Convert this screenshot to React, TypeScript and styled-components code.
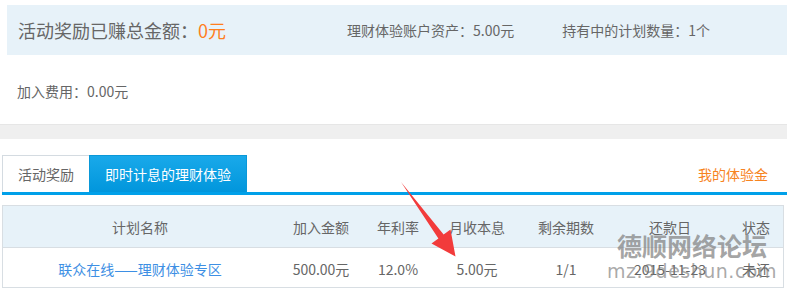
import React from 'react'
import styled, { createGlobalStyle } from 'styled-components'

const GlobalStyle = createGlobalStyle`
  html, body {
    margin: 0;
    padding: 0;
    background: #fff;
    font-family: "Microsoft YaHei", "Noto Sans CJK SC", "Noto Sans", sans-serif;
    color: #666;
  }
`

type Plan = {
  name: string
  amount: string
  rate: string
  monthly: string
  periods: string
  date: string
  status: string
}

const plans: Plan[] = [
  {
    name: '联众在线——理财体验专区',
    amount: '500.00元',
    rate: '12.0%',
    monthly: '5.00元',
    periods: '1/1',
    date: '2015-11-23',
    status: '未还',
  },
]

const columns = ['计划名称', '加入金额', '年利率', '月收本息', '剩余期数', '还款日', '状态']

export default function App() {
  return (
    <Page>
      <GlobalStyle />
      <Summary>
        <Headline>
          活动奖励已赚总金额：<Orange>0元</Orange>
        </Headline>
        <Stats>
          <Stat>理财体验账户资产：5.00元</Stat>
          <Stat>持有中的计划数量：1个</Stat>
        </Stats>
      </Summary>
      <Fee>加入费用：0.00元</Fee>
      <Band />
      <Lower>
        <TabBar>
          <Tab>活动奖励</Tab>
          <Tab active>即时计息的理财体验</Tab>
          <MyFund>我的体验金</MyFund>
        </TabBar>
        <Table>
          <HeadRow>
            {columns.map(c => (
              <Cell key={c}>{c}</Cell>
            ))}
          </HeadRow>
          {plans.map(p => (
            <BodyRow key={p.name}>
              <Cell link>{p.name}</Cell>
              <Cell>{p.amount}</Cell>
              <Cell>{p.rate}</Cell>
              <Cell>{p.monthly}</Cell>
              <Cell>{p.periods}</Cell>
              <Cell>{p.date}</Cell>
              <Cell>{p.status}</Cell>
            </BodyRow>
          ))}
        </Table>
      </Lower>
      <Arrow width="787" height="294" viewBox="0 0 787 294">
        <polygon
          points="401,182 443.6,234.6 450.5,229.6 455.5,256.5 431.5,243.5 438.4,238.6"
          fill="#f23b3b"
        />
      </Arrow>
      <Watermark>
        <WatermarkTitle>德顺网络论坛</WatermarkTitle>
        <WatermarkUrl>mz.9deshun.com</WatermarkUrl>
      </Watermark>
    </Page>
  )
}

const Page = styled.div({
  position: 'relative',
  width: 787,
  height: 294,
  overflow: 'hidden',
  paddingTop: 5,
  boxSizing: 'border-box',
})

const Summary = styled.div({
  marginLeft: 7,
  height: 50,
  background: '#e7f2f9',
  display: 'flex',
  alignItems: 'center',
  paddingLeft: 11,
})

const Headline = styled.div({
  width: 329,
  fontSize: 18,
  lineHeight: '24px',
  color: '#666',
  whiteSpace: 'nowrap',
})

const Orange = styled.span({
  color: '#ff7f1e',
})

const Stats = styled.div({
  display: 'flex',
  gap: 48,
})

const Stat = styled.div({
  fontSize: 14,
  lineHeight: '20px',
  color: '#666',
  whiteSpace: 'nowrap',
})

const Fee = styled.div({
  height: 69,
  display: 'flex',
  alignItems: 'center',
  paddingLeft: 17,
  fontSize: 14,
  color: '#666',
  paddingTop: 2,
  boxSizing: 'border-box',
})

const Band = styled.div({
  height: 15,
  background: '#efefef',
  borderTop: '1px solid #e6e6e6',
  boxSizing: 'border-box',
})

const Lower = styled.div({
  paddingTop: 16,
  paddingLeft: 2,
  paddingRight: 3,
})

const TabBar = styled.div({
  display: 'flex',
  alignItems: 'stretch',
  height: 37,
  borderBottom: '3px solid #00a0e9',
  marginRight: -3,
})

const Tab = styled.div<{ active?: boolean }>(
  {
    padding: '0 15px',
    display: 'flex',
    alignItems: 'center',
    fontSize: 14,
    whiteSpace: 'nowrap',
    boxSizing: 'border-box',
  },
  ({ active }) =>
    active
      ? {
          color: '#fff',
          background: 'linear-gradient(#19a9ea, #0196dc)',
          border: '1px solid #0a98d8',
          borderBottom: 'none',
        }
      : {
          color: '#666',
          background: '#fff',
          border: '1px solid #d4dbe1',
          borderBottom: 'none',
          borderRight: 'none',
        },
)

const MyFund = styled.div({
  marginLeft: 'auto',
  marginRight: 19,
  display: 'flex',
  alignItems: 'center',
  fontSize: 14,
  color: '#f7841f',
})

const Table = styled.div({
  marginTop: 10,
  width: 782,
  border: '1px solid #d8dee3',
  boxSizing: 'border-box',
})

const rowGrid = {
  display: 'grid',
  gridTemplateColumns: '274px 88px 66px 92px 86px 122px 50px 1fr',
  alignItems: 'center',
}

const HeadRow = styled.div({
  ...rowGrid,
  height: 41,
  background: '#e7f2f9',
  borderBottom: '1px solid #d8dee3',
  color: '#666',
})

const BodyRow = styled.div({
  ...rowGrid,
  height: 39,
  background: '#fff',
  color: '#666',
  paddingTop: 2,
  boxSizing: 'border-box',
})

const Cell = styled.div<{ link?: boolean }>(
  {
    textAlign: 'center',
    fontSize: 14,
    whiteSpace: 'nowrap',
  },
  ({ link }) => (link ? { color: '#3d8fe4' } : null),
)

const Arrow = styled.svg({
  position: 'absolute',
  left: 0,
  top: 0,
  pointerEvents: 'none',
})

const Watermark = styled.div({
  position: 'absolute',
  left: 606,
  top: 229,
  width: 172,
  pointerEvents: 'none',
  textAlign: 'center',
})

const WatermarkTitle = styled.div({
  fontSize: 25,
  fontWeight: 700,
  lineHeight: '32px',
  color: 'rgba(125, 125, 125, 0.7)',
})

const WatermarkUrl = styled.div({
  fontFamily: '"DejaVu Sans", "Liberation Sans", sans-serif',
  fontSize: 19,
  fontWeight: 400,
  lineHeight: '20px',
  letterSpacing: 0.5,
  whiteSpace: 'nowrap',
  color: 'rgba(120, 120, 120, 0.65)',
})
